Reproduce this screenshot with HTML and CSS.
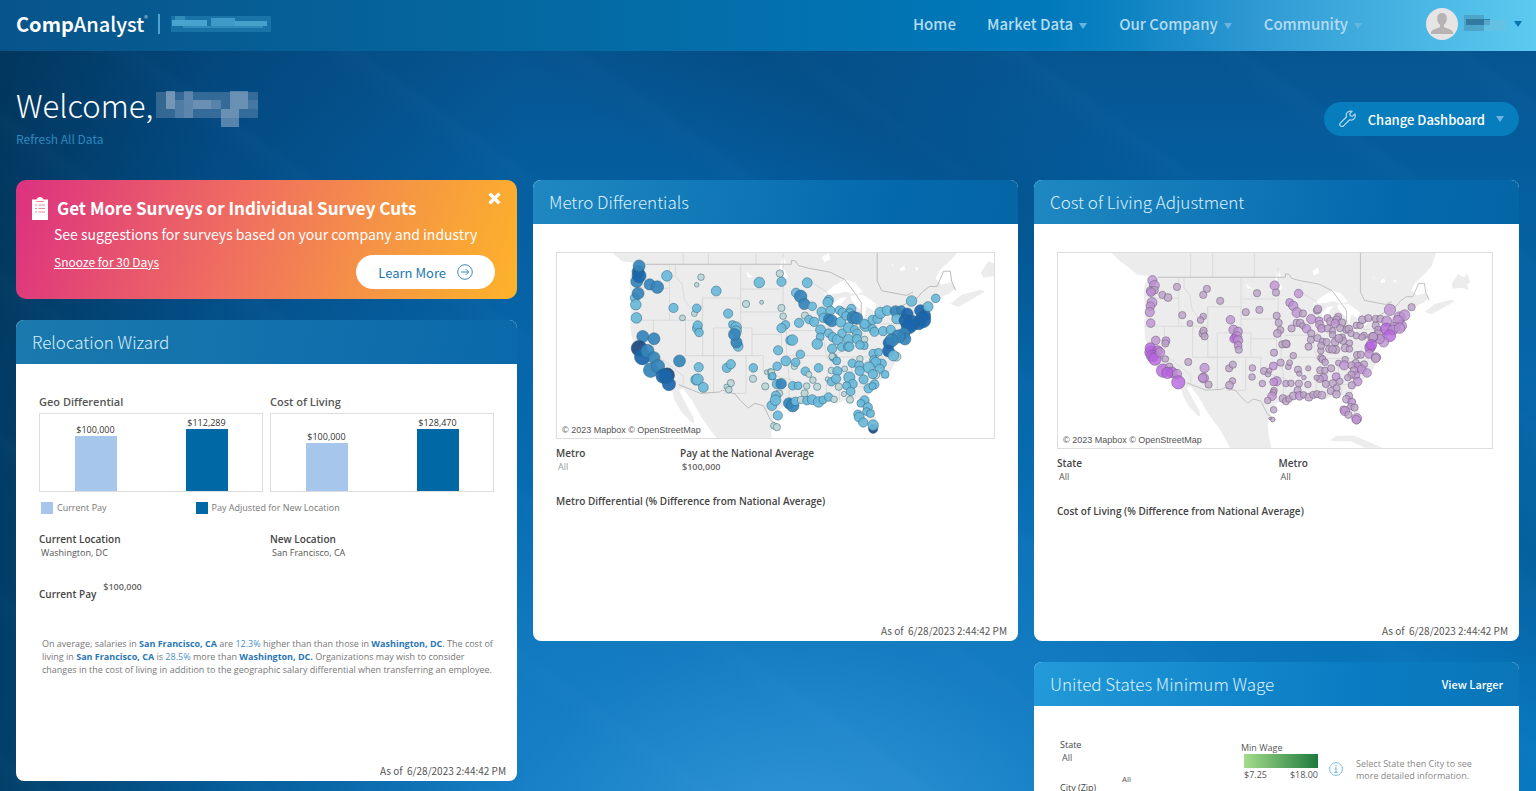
FILE: index.html
```html
<!DOCTYPE html>
<html lang="en">
<head>
<meta charset="utf-8">
<title>CompAnalyst Dashboard</title>
<link rel="stylesheet" href="styles.css">
</head>
<body>
<header class="topbar">
  <div class="brand"><strong>Comp</strong>Analyst<sup>®</sup></div>
  <svg class="company" viewBox="0 0 100 20" aria-hidden="true">
    <rect width="100" height="16" y="2" fill="#3596c4" opacity=".4"/>
    <rect x="1" y="6" width="35" height="6" fill="#58b4dc" opacity=".75"/>
    <rect x="4" y="2" width="10" height="4" fill="#4aa6d0" opacity=".5"/>
    <rect x="40" y="4" width="24" height="8" fill="#58b4dc" opacity=".6"/>
    <rect x="64" y="7" width="32" height="5" fill="#58b4dc" opacity=".7"/>
    <rect x="12" y="12" width="80" height="2" fill="#3c9cc9" opacity=".6"/>
  </svg>
  <nav class="nav">
    <a href="#">Home</a>
    <a href="#">Market Data<span class="caret"></span></a>
    <a href="#">Our Company<span class="caret"></span></a>
    <a href="#">Community<span class="caret"></span></a>
  </nav>
  <button class="account" type="button" aria-label="Account">
    <svg class="avatar" viewBox="0 0 32 32"><circle cx="16" cy="16" r="16" fill="#e6e4e4"/><path d="M16 5c-3.600 0-5 2.600-4.800 5.800.1 2.800 1.200 4.700 2.800 6v2.200c-2 1.600-8 1.600-9 5.600v1.400h22v-1.400c-1-4-7-4-9-5.600v-2.200c1.600-1.300 2.700-3.200 2.800-6C21 7.600 19.600 5 16 5z" fill="#b7b3b3"/></svg>
    <svg class="user" viewBox="0 0 44 20" aria-hidden="true"><rect width="20" height="16" y="1" fill="#4a93b4" opacity=".6"/><rect y="5" x="2" width="24" height="6" fill="#2c6f93" opacity=".8"/><rect x="20" y="6" width="22" height="11" fill="#6cbfdd" opacity=".6"/></svg>
    <span class="caret caret-dark"></span>
  </button>
</header>

<main class="page">
  <section class="intro">
    <div>
      <h1>Welcome,<svg class="name" viewBox="0 0 102 36" aria-hidden="true"><g fill="#8fa9c6"><rect width="102" height="26" y="1" opacity=".35"/><rect x="10" width="9" height="18" opacity=".7"/><rect x="19" y="9" width="9" height="18" opacity=".3"/><rect x="28" y="0" width="9" height="27" opacity=".45"/><rect x="37" y="9" width="18" height="9" opacity=".6"/><rect x="55" y="9" width="10" height="9" opacity=".4"/><rect x="65" y="18" width="18" height="18" opacity=".6"/><rect x="74" width="18" height="18" opacity=".6"/><rect x="92" y="9" width="10" height="9" opacity=".2"/></g></svg></h1>
      <a class="refresh" href="#">Refresh All Data</a>
    </div>
    <button class="change" type="button">
      <svg viewBox="0 0 20 20" class="wrench"><path d="M17.600 4.300 14.900 7l-2.400-.6-.6-2.400 2.700-2.500C12.700.9 10.600 1.300 9.300 2.700 8 4 7.800 5.900 8.400 7.500L1.700 14.300c-1 1-1 2.500-.1 3.400s2.500.9 3.400-.1l6.800-6.800c1.600.7 3.500.4 4.800-.9 1.400-1.400 1.800-3.700 1-5.600z" fill="none" stroke="#b9dcef" stroke-width="1.300" stroke-linejoin="round"/></svg>
      <span>Change Dashboard</span><span class="caret"></span>
    </button>
  </section>

  <div class="columns">
    <div class="column">
      <section class="promo">
        <h2><svg class="clip" viewBox="0 0 16 23"><path d="M0 2.500h4.500C5 1 6.300 0 8 0s3 1 3.500 2.500H16V23H0z" fill="#fff"/><path d="M4 4.500h8M3 8h2M6.500 8H13M3 11.500h2M6.500 11.500H13M3 15h2M6.500 15H13" stroke="#e98a93" fill="none"/></svg>Get More Surveys or Individual Survey Cuts</h2>
        <p>See suggestions for surveys based on your company and industry</p>
        <div class="promo-actions">
          <a href="#" class="snooze">Snooze for 30 Days</a>
          <button type="button" class="learn">Learn More <svg viewBox="0 0 16 16"><circle cx="8" cy="8" r="7.300" fill="none" stroke="#3a8abb"/><path d="M4 8h7.500M8.700 5l3 3-3 3" fill="none" stroke="#3a8abb"/></svg></button>
        </div>
        <button type="button" class="close" aria-label="Close"><svg viewBox="0 0 12 12"><path d="m1.500 1.500 9 9m0-9-9 9" stroke="#fff" stroke-width="3.200"/></svg></button>
      </section>

      <section class="panel">
        <header class="panel-head head-a"><h2>Relocation Wizard</h2></header>
        <div class="panel-body reloc">
          <div class="charts">
            <figure>
              <figcaption>Geo Differential</figcaption>
              <div class="plot">
                <div class="bar"><span>$100,000</span><i style="height:55px"></i></div>
                <div class="bar bar-new"><span>$112,289</span><i style="height:62px"></i></div>
              </div>
            </figure>
            <figure>
              <figcaption>Cost of Living</figcaption>
              <div class="plot">
                <div class="bar"><span>$100,000</span><i style="height:48px"></i></div>
                <div class="bar bar-new"><span>$128,470</span><i style="height:62px"></i></div>
              </div>
            </figure>
          </div>
          <ul class="legend"><li>Current Pay</li><li class="new">Pay Adjusted for New Location</li></ul>
          <dl class="fields halves">
            <div><dt>Current Location</dt><dd>Washington, DC</dd></div>
            <div><dt>New Location</dt><dd>San Francisco, CA</dd></div>
          </dl>
          <dl class="pay"><dt>Current Pay</dt><dd>$100,000</dd></dl>
          <p class="summary">On average, salaries in <b>San Francisco, CA</b> are <em>12.3%</em> higher than than those in <b>Washington, DC</b>. The cost of<br>living in <b>San Francisco, CA</b> is <em>28.5%</em> more than <b>Washington, DC.</b> Organizations may wish to consider<br>changes in the cost of living in addition to the geographic salary differential when transferring an employee.</p>
          <p class="asof">As of&nbsp; 6/28/2023 2:44:42 PM</p>
        </div>
      </section>
    </div>

    <div class="column">
      <section class="panel">
        <header class="panel-head head-b"><h2>Metro Differentials</h2></header>
        <div class="panel-body">
          <div class="map">
            <svg viewBox="17 36 1320 558" role="img" aria-label="Map of metro differentials">
              <defs>
                <g id="basemap">
                  <path fill="#ececec" d="M110-30 150 10 185 36 215 62 262 66 285 72 262 82 240 88 236 130 242 180 238 230 240 280 252 320 262 348 285 385 330 415 355 436 365 452 372 480 392 515 420 545 432 552 428 530 408 495 385 450 398 446 425 482 455 535 480 570 500 596 540 670 680 670 668 620 664 580 672 540 690 508 720 490 760 492 830 482 860 492 895 478 930 476 944 515 955 548 975 578 986 560 976 510 952 470 985 430 1025 392 1038 368 1015 325 1035 310 1052 285 1100 252 1130 246 1122 220 1148 195 1185 165 1200 160 1222 140 1208 124 1178 132 1160 112 1175 86 1210 54 1230 30 1250-30Z"/>
                  <path fill="#ececec" d="M1205 190 1240 162 1295 148 1310 152 1276 172 1230 198ZM1298 95l22-35 22 10 10-12 12 30-12 6 5 20-22-8-30 4ZM880 632l20-14 60-2 40 16 60 26-60 0-50-22-60 0z"/>
                  <path fill="#fff" d="M822 162l30-26 35-20 30 10 24 28-22 8-30-10-20 6ZM848 195l22-22 22-4-16 20-10 48-18 2ZM905 165l36-4 42 30-8 22-22-16-8 36-14-28-26-28ZM944 252l40-28 42-6-30 20-48 28ZM1012 205l42-8 2 10-36 8ZM588 90l14 14 12 4-20 2ZM818 48l20-12 4 20-18 8ZM700 46l10 20-14 10 20 30-10 10-16-40ZM1052 84l14-10 4 12-14 4ZM1098 80l10 0-4 12ZM1028 72l4-4-1 10Z"/>
                  <path fill="none" stroke="#d6d6d6" stroke-width="2.500" d="M375 72v34l20 24 8 50 25 32 26-10 3-30H572M357 72v70l-60 4-54-14M357 145v94M240 239H457M308 239v98l90 70v30M405 239v107M457 170v176H640M490 262v200M490 262H606v82M572 72v190M572 145H690M572 214H695M606 282H695M695 282v60M405 346H490M588 346v114H520M640 346v46l60 22 30 6M700 38v172l10 38v90l8 76v66M718 346h110M718 270h100l12 70 8 20M838 200v60l-20 10M855 170l-22 20M888 230v70l18 20M930 260v44l-24 20-76 26M828 350h180M855 350l-24 60v76M870 380v100M905 370l14 100M958 360l-30 20 40 66M905 440h60M995 250h100M1035 280l-60-12M474-20V70M398-20V70M618-20V70M760 110l70 42 20 50"/>
                  <path fill="none" stroke="#bababa" stroke-width="3" d="M285 70H725V58l12 2 10 14 30 8 65 12 44 22 30 40 20 30v40l-15 26 40-5 48-28 44-20 55-30 15-18 20-14h22l20-46h20l4 30 12 28M385 434l66 26 56-4 10-6 38 12 18 22 22 20 20-14 26 8 22 44 28 18M984-20V120l14 30 74 14 20-10"/>
                </g>
              </defs>
              <use href="#basemap"/>
              <g id="metro-dots" class="dots"></g>
            </svg>
            <span>© 2023 Mapbox © OpenStreetMap</span>
          </div>
          <dl class="fields metro-fields">
            <div><dt>Metro</dt><dd class="dim">All</dd></div>
            <div><dt>Pay at the National Average</dt><dd class="strong">$100,000</dd></div>
          </dl>
          <h3>Metro Differential (% Difference from National Average)</h3>
          <p class="asof">As of&nbsp; 6/28/2023 2:44:42 PM</p>
        </div>
      </section>
    </div>

    <div class="column">
      <section class="panel">
        <header class="panel-head head-b"><h2>Cost of Living Adjustment</h2></header>
        <div class="panel-body living">
          <div class="map">
            <svg viewBox="22 36 1306 586" role="img" aria-label="Map of cost of living">
              <use href="#basemap" transform="translate(74 48) scale(.872)"/>
              <g id="living-dots" class="dots purple"></g>
            </svg>
            <span>© 2023 Mapbox © OpenStreetMap</span>
          </div>
          <dl class="fields halves">
            <div><dt>State</dt><dd>All</dd></div>
            <div><dt>Metro</dt><dd>All</dd></div>
          </dl>
          <h3>Cost of Living (% Difference from National Average)</h3>
          <p class="asof">As of&nbsp; 6/28/2023 2:44:42 PM</p>
        </div>
      </section>

      <section class="panel">
        <header class="panel-head head-c"><h2>United States Minimum Wage</h2><a href="#">View Larger</a></header>
        <div class="panel-body wage">
          <dl class="wage-fields">
            <dt>State</dt><dd>All</dd>
            <dt class="city">City (Zip)</dt><dd class="zip">All</dd>
          </dl>
          <div class="scale"><p>Min Wage</p><div class="ramp"></div><div class="ends"><span>$7.25</span><span>$18.00</span></div></div>
          <svg class="info" viewBox="0 0 14 14"><circle cx="7" cy="7" r="6.400" fill="none" stroke="#74bfe0"/><path d="M7 3.200v1.500M5.800 6.200H7v4M5.500 10.500h3" fill="none" stroke="#74bfe0" stroke-width="1.200"/></svg>
          <p class="hint">Select State then City to see<br>more detailed information.</p>
        </div>
      </section>
    </div>
  </div>
</main>
<script src="script.js"></script>
</body>
</html>
```

FILE: styles.css
```css
* { box-sizing: border-box; }
body, h1, h2, h3, p, dl, dd, ul, figure { margin: 0; padding: 0; }
html { min-height: 100%; background: #0868ab; scrollbar-width: none; }
body {
  min-height: 100vh;
  font-family: "Noto Sans CJK SC", "Open Sans", sans-serif;
  color: #fff;
  background:
    linear-gradient(33deg, transparent 66%, rgba(0, 62, 112, .3) 74%, transparent 82%),
    repeating-linear-gradient(36deg, rgba(255, 255, 255, 0) 0 30px, rgba(120, 190, 255, .025) 54px, rgba(255, 255, 255, 0) 62px 130px),
    linear-gradient(90deg, rgba(0, 44, 76, .75), rgba(0, 54, 100, .45) 14%, transparent 34%),
    radial-gradient(ellipse 600px 400px at 52% 840px, #3296d8, rgba(30, 130, 200, .6) 50%, transparent),
    linear-gradient(180deg, #065591 50px, #055d9e 170px, #0872b8 620px, #0879c0 791px);
}
button { font: inherit; border: 0; cursor: pointer; }
a { color: inherit; text-decoration: none; }
.caret { display: inline-block; border: 4px solid transparent; border-top: 6px solid #6ab4df; border-bottom: 0; }
.caret-dark { border-top-color: #0873ad; }

.topbar {
  display: flex; align-items: center; height: 51px; padding: 0 14px 3px 16px;
  background: linear-gradient(90deg, #07548a, #05679f 32%, #0079bb 68%, #0980c0 72%, #2f9ad3 82%, #5dcaf0);
}
.brand { font-size: 20px; line-height: 24px; font-weight: 500; padding-right: 10px; border-right: 2px solid #4ea3cf; height: 20px; display: flex; align-items: center; }
.brand strong { font-weight: 700; }
.brand sup { font-size: 7px; line-height: 8px; align-self: flex-start; opacity: .7; }
.company { width: 100px; height: 20px; margin-left: 11px; }
.nav { display: flex; gap: 31px; margin-left: auto; font-size: 15px; line-height: 24px; font-weight: 500; color: #b6dcf2; }
.nav .caret { margin: 0 1px 1px 6px; }
.account { display: flex; align-items: center; gap: 6px; padding: 0; margin-left: 63px; background: none; }
.avatar { width: 32px; height: 32px; }
.user { width: 44px; height: 20px; }

.page { padding: 0 17px 24px 16px; }
.intro { display: flex; justify-content: space-between; align-items: flex-start; height: 129px; padding-top: 32px; }
h1 { display: flex; align-items: center; gap: 3px; font-size: 31px; line-height: 44px; font-weight: 300; }
.name { width: 102px; height: 36px; margin-top: 8px; }
.refresh { display: block; margin-top: 2px; font-size: 12px; line-height: 20px; color: #2f88bd; }
.change { display: flex; align-items: center; gap: 11px; height: 34px; margin-top: 19px; padding: 0 15px; border-radius: 17px; background: #087dbe; color: #fff; font-size: 13px; font-weight: 500; }
.wrench { width: 18px; height: 18px; }

.columns { display: grid; grid-template-columns: 501fr 485fr 485fr; gap: 16px; align-items: start; }
.column { display: grid; gap: 21px; min-width: 0; }

.promo { position: relative; padding: 16px 22px 10px 16px; border-radius: 10px; background: linear-gradient(107deg, #dc3180, #f0705f 45%, #f59544 72%, #fdb32a); }
.promo h2 { display: flex; align-items: center; gap: 9px; font-size: 17px; line-height: 24px; font-weight: 700; }
.clip { width: 16px; height: 23px; }
.promo p { padding-left: 22px; margin-top: 2px; font-size: 14px; line-height: 24px; }
.promo-actions { display: flex; justify-content: space-between; margin-top: 9px; padding-left: 22px; }
.snooze { font-size: 12px; line-height: 14px; text-decoration: underline; }
.learn { display: flex; align-items: center; gap: 11px; height: 34px; padding: 0 22px; border-radius: 17px; background: #fff; color: #1a76af; font-size: 13px; }
.learn svg { width: 16px; height: 16px; }
.close { position: absolute; top: 12px; right: 16px; padding: 0; background: none; line-height: 0; }
.close svg { width: 13px; height: 13px; }

.panel { border-radius: 8px; overflow: hidden; background: #fff; color: #555; font-family: "Open Sans", "Noto Sans", sans-serif; }
.panel-head { display: flex; align-items: center; justify-content: space-between; height: 44px; padding: 0 16px; color: #d9f0fb; font-family: "Noto Sans CJK SC", "Open Sans", sans-serif; }
.panel-head h2 { font-size: 17px; line-height: 24px; font-weight: 300; }
.panel-head a { font-size: 11px; line-height: 20px; font-weight: 500; color: #fff; }
.head-a { background: linear-gradient(100deg, #1b79ae, #0a69aa); }
.head-b { background: linear-gradient(100deg, #1f88c1, #0468ad 75%, #0566a5); }
.head-c { background: linear-gradient(100deg, #239ad9, #0a7cc3 65%, #0a76b8); }
.panel-body { display: flex; flex-direction: column; min-height: 417px; padding: 28px 23px 3px; font-size: 9px; line-height: 13px; }
.reloc { padding-top: 30px; }
.living { padding-right: 26px; }

.charts { display: grid; grid-template-columns: 1fr 1fr; gap: 7px; }
figcaption { font-size: 11px; line-height: 15px; font-weight: 600; margin-bottom: 4px; }
.plot { display: grid; grid-template-columns: 1fr 1fr; height: 79px; border: 1px solid #ddd; }
.bar { display: flex; flex-direction: column; justify-content: flex-end; align-items: center; color: #333; }
.bar i { width: 42px; background: #a6c7eb; }
.bar-new i { background: #0069a5; }
.legend { display: flex; gap: 89px; margin: 9px 2px 0; list-style: none; color: #777; }
.legend li { display: flex; align-items: center; gap: 4px; }
.legend li::before { content: ""; width: 12px; height: 12px; background: #a6c7eb; }
.legend .new::before { background: #0069a5; }

.fields { display: grid; margin-top: 19px; }
.halves { grid-template-columns: 1fr 1fr; column-gap: 7px; }
dt, h3 { font-size: 10px; line-height: 13px; font-weight: 600; color: #444; }
.fields dd { padding-left: 2px; }
.fields .dim { color: #999; }
.fields .strong, .pay dd { font-weight: 600; color: #666; }
.pay { display: flex; gap: 7px; margin-top: 21px; }
.pay dt { padding-top: 8px; }
.summary { margin: 36px 0 0 3px; font-size: 9px; white-space: nowrap; color: #777; }
.summary b { color: #2a76b5; }
.summary em { color: #4a90c8; font-style: normal; }
.asof { margin: auto -12px 0 0; padding-top: 20px; text-align: right; font-family: "Noto Sans CJK SC", sans-serif; font-size: 10px; line-height: 14px; }
.living .asof { margin-right: -15px; }

.map { position: relative; border: 1px solid #ddd; line-height: 0; }
.map svg { display: block; width: 100%; height: auto; }
.map span { position: absolute; left: 5px; bottom: 2px; font: 9px/12px "Liberation Sans", Arial, sans-serif; color: #555; }
.dots { stroke: #2f6079; stroke-width: 2; fill-opacity: .92; stroke-opacity: .75; }
.dots .a { fill: #bdd5d2; }
.dots .b { fill: #69b8d9; }
.dots .c { fill: #3584bb; }
.dots .d { fill: #1a66ac; }
.dots .e { fill: #1c477f; }
.purple { stroke: #6c5478; fill-opacity: .78; }
.purple .a { fill: #b9a0c4; }
.purple .b { fill: #bd8fd1; }
.purple .c { fill: #b563dc; }
.metro-fields { grid-template-columns: 124px 1fr; margin-top: 8px; }
.map + .halves { margin-top: 8px; }
h3 { margin-top: 22px; }

.wage { display: grid; grid-template-columns: 181px 79px 14px 1fr; column-gap: 0; align-content: start; padding: 32px 26px 4px; }
.wage-fields { display: grid; grid-template-columns: 60px 1fr; align-content: start; }
.wage-fields dt, .wage-fields dd { grid-column: 1; font-size: 9px; line-height: 13px; font-weight: 400; }
.wage-fields dd { padding-left: 2px; }
.wage-fields .zip { grid-column: 2; grid-row: 3; font-size: 8px; padding-top: 8px; }
.wage-fields .city { grid-row: 3; padding-top: 17px; }
.scale p { line-height: 13px; padding-top: 3px; }
.ramp { height: 14px; margin: 0 2px 0 3px; background: linear-gradient(90deg, #a4dc8c, #1e7a3c); }
.ends { display: flex; justify-content: space-between; margin: 0 2px 0 3px; }
.info { width: 14px; height: 14px; margin: 24px 0 0 9px; }
.hint { padding: 20px 0 0 22px; line-height: 12px; white-space: nowrap; color: #888; }
```

FILE: script.js
```js
// Each record is "x y radius tone"; the second list of a map starts 660 units further east.
const metroWest = `258 122 18 c;262 92 18 d;265 105 21 d;265 75 18 c;297 131 17 c;320 139 19 c;349 105 16 b;452 109 10 a;439 132 7 a;498 151 15 b;628 125 16 b;252 172 14 b;262 158 18 c;255 192 16 b;257 232 16 b;369 202 14 b;396 232 9 a;432 219 9 a;439 203 13 b;588 190 11 a;635 185 6 a;534 219 14 b;440 264 14 b;442 255 14 b;446 276 13 b;547 252 12 b;558 260 16 b;558 272 16 b;564 318 15 b;559 306 17 c;553 282 18 c;276 288 18 c;310 295 18 c;265 324 24 e;275 350 24 d;290 332 20 c;310 352 18 c;300 390 22 c;322 378 20 c;350 405 22 e;338 408 22 d;346 410 20 d;355 432 20 d;387 362 18 c;445 381 14 b;437 419 16 b;442 418 17 b;459 442 15 b;530 383 14 b;542 372 14 b;542 429 11 a;529 440 8 a;536 449 10 a;610 383 13 b;609 416 11 a;646 439 11 a;650 396 7 a;662 394 9 a;666 408 12 b`;
const metroEast = `30 98 11 a;35 123 14 b;113 126 15 b;79 156 14 b;93 167 19 c;104 190 17 c;128 197 13 b;35 202 11 a;40 227 10 a;106 225 11 a;88 247 14 b;47 253 13 b;35 263 14 b;62 300 14 b;68 299 16 b;25 330 14 b;92 342 13 b;48 362 15 b;74 378 10 a;78 366 13 b;22 378 13 b;5 396 10 a;8 408 11 b;107 393 13 b;118 403 9 a;147 383 13 b;130 420 10 a;111 438 10 a;143 440 11 a;105 460 11 a;21 432 14 b;34 431 16 c;69 437 13 b;85 437 12 b;28 460 11 a;18 467 14 b;6 497 15 b;17 481 16 b;24 527 14 b;12 558 10 a;21 562 11 a;58 490 17 c;69 497 19 c;77 484 13 b;94 480 11 a;112 482 13 b;128 479 15 b;147 486 16 b;160 480 12 b;177 471 13 b;194 478 10 a;178 178 14 b;175 185 15 b;118 237 13 b;134 244 14 b;157 214 15 b;183 210 14 b;162 232 14 b;178 236 16 c;187 241 18 c;210 209 13 b;220 216 14 b;246 205 14 b;242 218 14 b;214 245 15 b;230 226 13 b;252 231 19 c;262 233 18 c;153 268 15 b;178 278 13 b;152 289 12 b;143 311 16 b;190 290 14 b;204 298 16 b;188 325 14 b;218 278 13 b;238 262 16 b;256 268 13 b;238 298 16 b;264 280 14 b;263 296 14 b;217 320 13 b;236 319 14 b;240 319 14 b;286 297 10 a;285 316 12 b;272 314 13 b;289 256 17 b;286 250 14 b;310 238 14 b;310 265 13 b;325 235 14 b;316 274 14 b;334 217 17 b;354 210 15 b;342 272 14 b;365 268 14 b;380 212 17 c;397 209 14 c;383 235 15 b;428 181 16 b;501 173 13 b;455 210 18 d;415 220 18 d;468 225 18 d;478 198 15 b;410 240 20 d;462 238 24 d;450 248 20 d;428 248 24 d;420 257 23 d;405 280 18 c;408 296 18 c;388 288 20 c;360 308 18 d;368 300 20 c;358 332 18 d;382 349 14 a;373 346 16 b;312 340 13 b;328 336 12 b;272 356 10 a;192 352 12 b;188 348 10 a;202 362 12 b;249 369 13 b;270 376 14 b;315 360 14 b;338 370 14 b;320 366 15 b;332 386 14 b;319 404 13 a;299 382 17 b;271 392 14 b;311 402 14 b;348 403 12 b;283 418 14 b;226 386 9 a;186 391 10 a;204 393 14 b;174 417 7 a;186 425 13 b;200 416 14 b;240 412 17 b;208 440 11 a;250 432 14 b;232 437 12 b;244 454 13 b;224 462 8 a;242 479 11 a;316 433 14 b;298 445 14 b;310 438 11 b;286 481 14 b;275 490 12 b;296 502 14 b;292 515 12 b;304 521 12 b;266 523 13 b;270 532 15 b;282 548 14 b;312 567 14 e;312 556 16 b`;
const livingWest = `306 118 14 b;312 134 15 b;302 150 14 b;312 148 12 a;302 154 13 b;336 162 11 a;353 170 12 a;380 138 11 a;470 144 11 a;459 162 11 a;510 180 11 a;621 157 11 a;305 185 15 b;300 196 13 b;298 214 14 b;301 247 13 b;396 223 11 a;419 248 9 a;459 227 10 a;451 238 10 a;587 214 11 a;628 207 11 a;541 237 13 b;550 267 14 b;564 272 13 b;560 288 15 b;552 294 13 c;564 299 14 b;564 314 12 b;566 327 11 a;458 278 12 a;460 270 11 a;463 287 11 a;316 299 13 b;347 300 12 b;345 308 11 a;302 335 19 c;300 322 16 c;322 330 15 c;306 346 18 c;314 355 19 c;329 335 14 b;345 355 10 a;338 390 20 c;357 378 11 a;365 395 16 c;351 397 17 c;380 400 14 b;384 425 20 c;414 364 11 a;463 382 14 b;460 412 15 b;457 412 13 b;475 432 11 a;537 383 11 a;548 372 11 a;547 421 10 a;538 434 12 a;607 382 10 a;606 409 10 a;637 429 10 a;642 391 11 a;654 400 9 a;658 390 8 a`;
const livingEast = `14 134 14 b;18 155 11 a;86 158 13 b;59 185 12 b;70 195 14 b;81 215 15 b;99 218 11 a;20 225 11 a;26 246 11 a;65 263 11 a;31 268 11 a;22 278 12 a;12 336 11 a;70 345 10 a;32 366 11 a;10 376 12 b;55 378 9 a;59 366 9 a;37 311 11 a;50 310 11 a;48 309 12 a;84 387 11 a;88 399 8 a;115 383 8 a;102 411 7 a;48 429 10 a;63 428 10 a;20 422 14 b;11 424 12 b;87 429 11 a;114 432 10 a;83 449 11 a;12 450 10 a;10 456 10 a;6 467 13 b;-7 480 10 a;11 508 10 a;8 537 7 a;0 534 4 a;39 474 12 a;48 482 11 a;57 475 10 a;70 466 12 a;89 466 13 b;101 463 10 a;117 470 12 a;130 463 11 a;142 461 11 a;156 464 12 a;141 209 11 a;144 205 12 a;80 246 11 a;91 247 12 a;98 255 9 a;110 264 13 b;124 235 14 b;148 240 12 b;150 252 13 a;155 263 12 b;173 232 11 a;182 242 12 a;174 263 11 a;205 228 11 a;200 237 12 a;216 246 12 a;196 248 13 b;188 270 10 a;211 262 11 a;124 278 11 a;123 297 11 a;143 292 11 a;116 318 11 a;158 302 10 a;153 330 10 a;154 315 11 a;170 304 11 a;188 282 10 a;196 304 12 a;178 325 11 a;198 327 12 a;188 326 12 a;217 289 10 a;220 300 11 a;239 307 10 a;226 322 12 a;239 325 10 a;207 293 12 a;230 267 11 a;237 265 12 a;244 278 10 a;260 285 10 a;260 254 10 a;271 254 10 a;278 237 12 a;296 232 11 a;318 234 11 a;332 234 11 a;283 284 10 a;277 289 10 a;318 254 11 a;326 267 11 a;361 207 17 b;351 241 15 b;426 199 11 a;390 230 17 b;405 223 16 b;395 255 16 b;385 240 16 b;375 260 15 b;350 265 18 c;370 268 15 b;390 262 16 b;360 285 18 c;325 282 15 a;342 304 15 b;330 295 14 b;309 290 15 b;311 288 13 a;301 320 16 c;305 312 16 c;298 340 13 b;319 350 14 b;318 353 13 a;262 343 11 a;273 342 11 a;226 357 10 a;206 367 9 a;223 374 14 b;153 351 10 a;158 356 11 a;166 365 10 a;184 383 11 a;151 389 11 a;165 389 10 a;161 411 12 b;150 415 11 a;140 411 8 a;199 408 12 b;168 430 11 a;189 428 11 a;210 422 10 a;200 443 11 a;183 451 11 a;200 461 12 a;258 367 11 a;267 379 14 b;283 371 11 a;245 374 11 a;253 390 12 a;276 386 13 b;292 397 13 b;258 405 12 b;245 402 11 a;234 411 10 a;264 423 13 b;246 434 11 a;238 466 11 a;230 476 12 a;246 485 12 b;243 498 10 a;254 501 11 a;222 508 12 a;226 512 14 b;236 523 11 a;261 534 15 b;260 538 13 b`;

function plot(id, list, offset) {
  const layer = document.getElementById(id);
  for (const record of list.split(";")) {
    const [x, y, r, tone] = record.split(" ");
    const dot = document.createElementNS("http://www.w3.org/2000/svg", "circle");
    dot.setAttribute("cx", Number(x) + offset);
    dot.setAttribute("cy", y);
    dot.setAttribute("r", r);
    dot.setAttribute("class", tone);
    layer.appendChild(dot);
  }
}
plot("metro-dots", metroWest, 0);
plot("metro-dots", metroEast, 660);
plot("living-dots", livingWest, 0);
plot("living-dots", livingEast, 660);
```
